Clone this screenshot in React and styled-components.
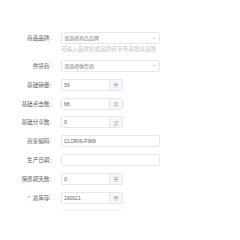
import React from "react";
import styled, { createGlobalStyle } from "styled-components";

const Global = createGlobalStyle`
  html, body { margin: 0; padding: 0; background: #fff; }
  body { font-family: "Liberation Sans", "Noto Sans CJK SC", sans-serif; }
`;

const Form = styled.div`
  padding-top: 32px;
  width: 240px;
  height: 240px;
  box-sizing: border-box;
`;

const Item = styled.div`
  display: flex;
  flex-direction: column;
  margin-bottom: 6.85px;
`;

const Line = styled.div`
  display: flex;
  align-items: center;
  height: 12px;
`;

const Label = styled.label`
  width: 61px;
  box-sizing: border-box;
  padding-right: 10px;
  text-align: right;
  font-family: "Liberation Sans", "Noto Sans CJK SC", sans-serif;
  font-size: 5.6px;
  line-height: 12px;
  color: #606266;
  white-space: nowrap;
`;

const Star = styled.span`
  color: #f56c6c;
  margin-right: 2.5px;
`;

const Box = styled.div`
  display: flex;
  align-items: center;
  width: ${(p) => p.$w}px;
  height: 12px;
  box-sizing: border-box;
  border: 1px solid #e4e7ed;
  border-radius: 1.5px;
  background: #fff;
  overflow: hidden;
`;

const Value = styled.span`
  flex: 1;
  padding-left: 2px;
  font-size: 5px;
  line-height: 10px;
  color: ${(p) => (p.$ph ? "#7a7d83" : "#606266")};
  white-space: nowrap;
`;

const Addon = styled.span`
  width: 12px;
  height: 100%;
  display: flex;
  align-items: center;
  justify-content: center;
  background: #f5f7fa;
  border-left: 1px solid #e4e7ed;
  font-size: 5px;
  color: #909399;
`;

const Chevron = styled.svg`
  width: 4px;
  height: 3px;
  margin-right: 3px;
`;

const Help = styled.div`
  margin-left: 61px;
  margin-top: 2px;
  font-size: 5.6px;
  line-height: 7px;
  color: #c0c4cc;
  white-space: nowrap;
`;

const Divider = styled.div`
  margin-left: 61px;
  width: 62px;
  border-top: 1px solid #ebeef5;
  margin-top: -1px;
`;

function Select({ placeholder }) {
  return (
    <Box $w={99}>
      <Value $ph>{placeholder}</Value>
      <Chevron viewBox="0 0 4 3">
        <path d="M0.5 0.8 L2 2.2 L3.5 0.8" fill="none" stroke="#b0b4bc" strokeWidth="0.6" />
      </Chevron>
    </Box>
  );
}

function Row({ label, required, children }) {
  return (
    <Line>
      <Label>
        {required && <Star>*</Star>}
        {label}:
      </Label>
      {children}
    </Line>
  );
}

const numberRows = [
  { label: "基础销量", value: "59", unit: "件" },
  { label: "基础点击数", value: "68", unit: "次" },
  { label: "基础分享数", value: "0", unit: "次" },
];

export default function App() {
  return (
    <>
      <Global />
      <Form>
        <Item>
          <Row label="商品品牌">
            <Select placeholder="请选择商品品牌" />
          </Row>
          <Help>可输入品牌名或品牌首字母来搜索品牌</Help>
        </Item>
        <Item>
          <Row label="供货商">
            <Select placeholder="请选择供货商" />
          </Row>
        </Item>
        {numberRows.map((r) => (
          <Item key={r.label}>
            <Row label={r.label}>
              <Box $w={62}>
                <Value>{r.value}</Value>
                <Addon>{r.unit}</Addon>
              </Box>
            </Row>
          </Item>
        ))}
        <Item>
          <Row label="商家编码">
            <Box $w={99}>
              <Value>CLORIS-F988</Value>
            </Box>
          </Row>
        </Item>
        <Item>
          <Row label="生产日期">
            <Box $w={99} />
          </Row>
        </Item>
        <Item>
          <Row label="保质期天数">
            <Box $w={62}>
              <Value>0</Value>
              <Addon>天</Addon>
            </Box>
          </Row>
        </Item>
        <Item>
          <Row label="总库存" required>
            <Box $w={62}>
              <Value>190021</Value>
              <Addon>件</Addon>
            </Box>
          </Row>
        </Item>
        <Divider />
      </Form>
    </>
  );
}
